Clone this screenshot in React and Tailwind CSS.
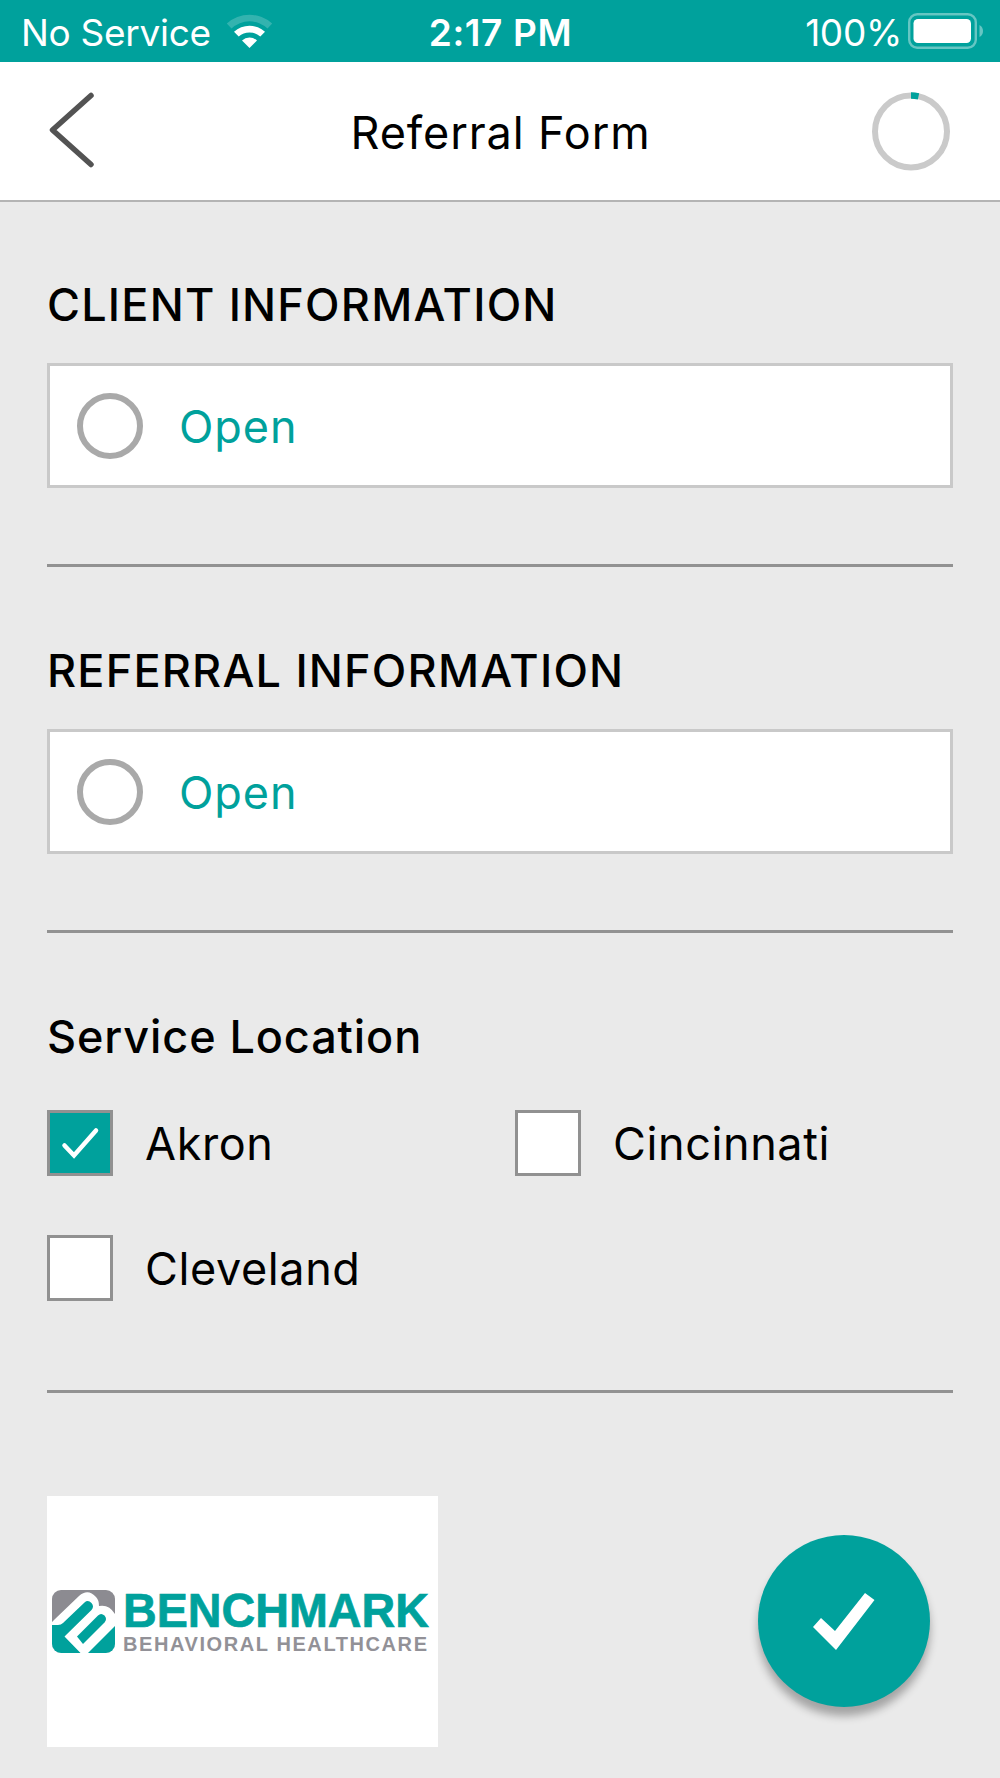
import React, { useState } from "react";

const LOCATIONS = ["Akron", "Cincinnati", "Cleveland"];

const WifiIcon = () => (
  <svg className="w-[48px] h-[36px]" viewBox="0 0 48 36" fill="white">
    <path d="M0.8 10.5A34 34 0 0 1 46.2 10.5L41.5 15.6A26 26 0 0 0 5.5 15.6Z" opacity="0.2" />
    <path d="M8 18.8A23 23 0 0 1 39 18.8L34.3 23.6A16 16 0 0 0 12.7 23.6Z" />
    <path d="M16 27.5A11 11 0 0 1 31 27.5L23.5 35Z" />
  </svg>
);

const BatteryIcon = () => (
  <svg className="w-[76px] h-[36px]" viewBox="0 0 76 36" fill="none">
    <rect x="1.2" y="1.2" width="66.6" height="33.6" rx="8" stroke="white" strokeOpacity="0.4" strokeWidth="2.4" />
    <rect x="5.5" y="6" width="57.5" height="24" rx="4.5" fill="white" />
    <path d="M71.500 12Q75 14 75 18Q75 22 71.500 24Z" fill="white" fillOpacity="0.4" />
  </svg>
);

const StatusBar = () => (
  <div className="h-[62px] bg-[#00a19c] text-white text-[37px] grid grid-cols-3 items-center pl-[20px] pr-[16px]">
    <div className="flex items-center">
      <span className="pt-[3px] pl-[1px] tracking-[-0.3px] whitespace-nowrap">No Service</span>
      <div className="ml-[15px]">
        <WifiIcon />
      </div>
    </div>
    <div className="pt-[3px] pr-[3px] text-center font-semibold tracking-[0.6px] whitespace-nowrap">
      2:17 PM
    </div>
    <div className="flex items-center justify-end">
      <span className="pt-[3px] tracking-[-0.3px]">100%</span>
      <div className="ml-[6px]">
        <BatteryIcon />
      </div>
    </div>
  </div>
);

const Header = () => (
  <header className="h-[140px] bg-white border-b-2 border-[#b4b4b4] flex items-center justify-between pl-[47px] pr-[47px]">
    <button className="w-[85px]" aria-label="Back">
      <svg className="w-[50px] h-[80px]" viewBox="0 0 50 80" fill="none">
        <path
          d="M44 4.500L5.500 39L44 73.500"
          stroke="#535353"
          strokeWidth="5.5"
          strokeLinecap="round"
          strokeLinejoin="round"
        />
      </svg>
    </button>
    <h1 className="pt-[3px] text-[45px] tracking-[0.9px]">Referral Form</h1>
    <svg className="w-[84px] h-[80px]" viewBox="0 0 84 80" fill="none">
      <circle cx="42" cy="40.500" r="36" stroke="#cacaca" strokeWidth="6" />
      <path d="M42 4.500A36 36 0 0 1 49.500 5.300" stroke="#00a19c" strokeWidth="6.4" />
    </svg>
  </header>
);

const Section = ({ title }) => (
  <section className="border-b-[3px] border-[#929292] h-[366px] pt-[74px]">
    <h2 className="h-[60px] leading-[60px] text-[45px] font-medium tracking-[1.2px] whitespace-nowrap">
      {title}
    </h2>
    <button className="mt-[28px] w-full h-[125px] bg-white border-[3px] border-[#c9c9c9] flex items-center pl-[27px]">
      <span className="w-[66px] h-[66px] rounded-full border-[6px] border-[#a9a9a9]" />
      <span className="ml-[36px] pt-[2px] text-[45px] tracking-[0.9px] text-[#00a19c]">Open</span>
    </button>
  </section>
);

const Checkbox = ({ label, checked, onToggle }) => (
  <button
    role="checkbox"
    aria-checked={checked}
    onClick={onToggle}
    className="flex items-center h-[66px]"
  >
    <span
      className={`w-[66px] h-[66px] border-[3px] border-[#919191] ${
        checked ? "bg-[#00a19c]" : "bg-white"
      }`}
    >
      {checked && (
        <svg className="w-[60px] h-[60px]" viewBox="0 0 60 60" fill="none">
          <path d="M14.500 32.500L24 42.500L46 17.500" stroke="white" strokeWidth="4.5" strokeLinecap="round" />
        </svg>
      )}
    </span>
    <span className="ml-[32px] pt-[2px] text-[45px] tracking-[0.6px]">{label}</span>
  </button>
);

const LogoMark = () => (
  <svg className="w-[64px] h-[64px]" viewBox="0 0 64 64">
    <defs>
      <clipPath id="mark">
        <rect width="63" height="63" rx="9" />
      </clipPath>
    </defs>
    <g clipPath="url(#mark)">
      <rect width="64" height="64" fill="#8c8b91" />
      {/* white outline */}
      <path d="M0 32L3 29L27 6Q36 -2 44 7Q47 10 47 16Q57 14 63 24V64H0Z" fill="white" />
      {/* body with the long bar, then the right corner and the short bar */}
      <path d="M0 35H6Q9 35 11 33L32.500 12.500Q36 9.500 39.500 13Q42.500 16.500 39.500 20L12.500 46.500L29.500 64H0Z" fill="#00a19c" />
      <path d="M64 35V64H35Z" fill="#00a19c" />
      <path d="M25 46.500L46 25.500Q49 22.500 52.500 25.500Q55.500 29 52.500 32.500L31 54Z" fill="#00a19c" />
    </g>
  </svg>
);

const Logo = () => (
  <div className="w-[391px] h-[251px] bg-white flex items-center pl-[5px]">
    <LogoMark />
    <svg className="w-[316px] h-[100px] ml-[4px] overflow-visible" viewBox="0 0 316 100">
      <text
        x="3"
        y="55"
        textLength="306"
        lengthAdjust="spacingAndGlyphs"
        fill="#00a19c"
        stroke="#00a19c"
        strokeWidth="0.7"
        className="font-['Liberation_Sans'] font-bold text-[48px]"
      >
        BENCHMARK
      </text>
      <text
        x="3"
        y="79"
        textLength="304"
        fill="#929197"
        className="font-['Liberation_Sans'] font-bold text-[20px]"
      >
        BEHAVIORAL HEALTHCARE
      </text>
    </svg>
  </div>
);

export default function App() {
  const [selected, setSelected] = useState(["Akron"]);

  const toggle = (name) => {
    setSelected(
      selected.includes(name)
        ? selected.filter((item) => item !== name)
        : [...selected, name]
    );
  };

  return (
    <div className="w-[1000px] h-[1778px] overflow-hidden bg-[#eaeaea] text-black font-['Inter',sans-serif]">
      <StatusBar />
      <Header />
      <main className="px-[47px] -mt-px">
        <Section title="CLIENT INFORMATION" />
        <Section title="REFERRAL INFORMATION" />

        <section className="h-[460px] pt-[74px] border-b-[3px] border-[#929292]">
          <h2 className="h-[60px] leading-[60px] text-[45px] font-medium tracking-[0.9px]">
            Service Location
          </h2>
          <div className="mt-[43px] grid grid-cols-[468px_1fr] gap-y-[59px]">
            {LOCATIONS.map((name) => (
              <Checkbox
                key={name}
                label={name}
                checked={selected.includes(name)}
                onToggle={() => toggle(name)}
              />
            ))}
          </div>
        </section>

        <div className="mt-[103px] flex justify-between">
          <Logo />
          <button
            aria-label="Submit"
            className="mt-[39px] mr-[23px] w-[172px] h-[172px] rounded-full bg-[#00a19c] shadow-[0_9px_8px_rgba(0,0,0,0.3)]"
          >
            <svg className="w-[172px] h-[172px]" viewBox="0 0 172 172">
              <path d="M55 92L63 83L77 96L107 58L116.500 65L78 115Z" fill="white" />
            </svg>
          </button>
        </div>
      </main>
    </div>
  );
}
